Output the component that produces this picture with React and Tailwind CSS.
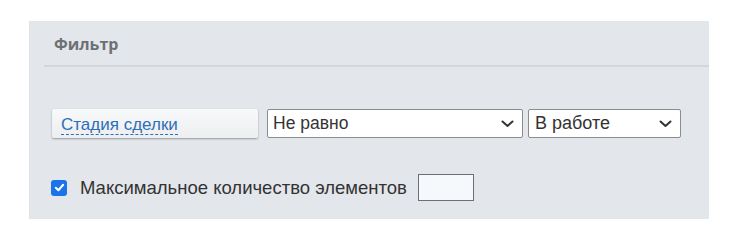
import React from "react";

function Chevron() {
  return (
    <svg width="13" height="8" viewBox="0 0 13 8" className="shrink-0">
      <path d="M1.5 1.5 L6.5 6 L11.5 1.5" fill="none" stroke="#333" strokeWidth="2" strokeLinecap="round" strokeLinejoin="round" />
    </svg>
  );
}

export default function App() {
  return (
    <div className="w-[735px] h-[249px] bg-white pt-[21px] pl-[29px]" style={{ fontFamily: '"Liberation Sans", Arial, sans-serif' }}>
      <div className="w-[680px] h-[198px] bg-[#e3e6ea] border-l border-[#dfe2e6] flex flex-col">
        <div className="h-[44px] pl-[24px] flex items-end pb-[9px]">
          <span className="text-[16px] font-bold text-[#6d7075]" style={{ fontFamily: '"Open Sans", Arial, sans-serif' }}>Фильтр</span>
        </div>
        <div className="ml-[14px] h-[2px] bg-[#d3d6da]" />
        <div className="pl-[22px] pt-[42px] flex items-center">
          <div className="w-[206px] h-[29px] rounded-[2px] bg-gradient-to-b from-[#f8f9fa] to-[#eceef0] shadow-[0_1px_2px_rgba(0,0,0,0.35)] flex items-center pl-[9px]">
            <span className="text-[17px] text-[#2e6fb7] border-b border-dashed border-[#2e6fb7] leading-[19px] mt-[2px]">Стадия сделки</span>
          </div>
          <div className="ml-[9px] w-[256px] h-[29px] bg-white border border-[#8a8d90] rounded-[2px] flex items-center justify-between pl-[5px] pr-[8px]">
            <span className="text-[17.5px] text-[#333]">Не равно</span>
            <Chevron />
          </div>
          <div className="ml-[5px] w-[153px] h-[29px] bg-white border border-[#8a8d90] rounded-[2px] flex items-center justify-between pl-[6px] pr-[8px]">
            <span className="text-[18px] text-[#333]">В работе</span>
            <Chevron />
          </div>
        </div>
        <div className="pl-[21px] pt-[36px] flex items-center">
          <div className="w-[16px] h-[16px] rounded-[3px] bg-[#1a73e8] flex items-center justify-center">
            <svg width="11" height="11" viewBox="0 0 12 12">
              <path d="M2 6.3 L4.8 9 L10 3" fill="none" stroke="white" strokeWidth="2.2" strokeLinecap="round" strokeLinejoin="round" />
            </svg>
          </div>
          <span className="ml-[13px] text-[18.5px] text-[#333]">Максимальное количество элементов</span>
          <div className="ml-[11px] w-[56px] h-[27px] bg-[#f6f9fc] border border-[#6d7075]" />
        </div>
      </div>
    </div>
  );
}
